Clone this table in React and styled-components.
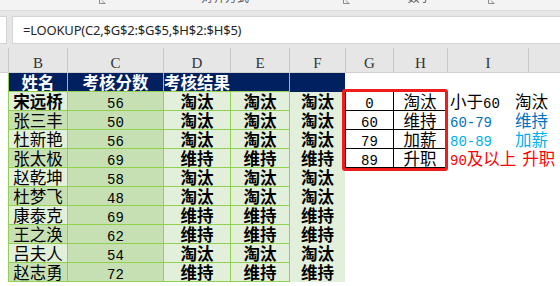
import React from 'react';
import styled, { createGlobalStyle } from 'styled-components';

const GREEN = '#92d050';
const LIGHT = '#e2efda';
const DARK = '#c6e0b4';
const NAVY = '#002060';
const CJK = `"Noto Sans CJK SC", "Noto Sans", sans-serif`;

const Global = createGlobalStyle`
  html, body { margin: 0; padding: 0; background: #fff; }
  body { width: 560px; height: 286px; overflow: hidden; font-family: ${CJK}; }
`;

const Page = styled.div`
  width: 560px;
  height: 286px;
  overflow: hidden;
  display: flex;
  flex-direction: column;
  background: #fff;
`;

const Ribbon = styled.div`
  height: 10px;
  flex: none;
  display: flex;
  background: #f3f3f3;
  border-bottom: 1px solid #d9d9d9;
  overflow: hidden;
`;

const RibbonGroup = styled.div`
  flex: none;
  width: ${(p) => p.$w}px;
  display: flex;
  align-items: flex-start;
`;

const GroupLabel = styled.div`
  flex: 1;
  text-align: center;
  font-family: ${CJK};
  font-size: 12px;
  line-height: 12px;
  color: #606060;
  margin-top: -9px;
  white-space: nowrap;
`;

const Launcher = styled.svg`
  flex: none;
  width: 8px;
  height: 5px;
  margin-right: 2px;
`;

const FormulaArea = styled.div`
  height: 37px;
  flex: none;
  box-sizing: border-box;
  padding: 5px 0 4px;
  display: flex;
  gap: 5px;
  background: #e6e6e6;
`;

const NameBox = styled.div`
  width: 7px;
  background: #fff;
  border: 1px solid #d4d4d4;
  border-left: none;
  box-sizing: border-box;
`;

const FormulaBox = styled.div`
  flex: 1;
  background: #fff;
  border: 1px solid #d4d4d4;
  border-right: none;
  padding-left: 10px;
  font-family: "Noto Sans", sans-serif;
  font-size: 13px;
  letter-spacing: -0.2px;
  line-height: 26px;
  color: #262626;
  white-space: nowrap;
`;

const Sheet = styled.div`
  position: relative;
  flex: none;
  display: grid;
  grid-template-columns: 8px 59px 96px 67px 59px 56px 48px 54px 81px 32px;
  grid-template-rows: 25px repeat(11, 19px);
`;

const HeaderCell = styled.div`
  background: #e6e6e6;
  border-left: ${(p) => (p.$first ? 'none' : '1px solid #c8c8c8')};
  border-bottom: 1px solid #d0d0d0;
  box-sizing: border-box;
  display: flex;
  align-items: flex-end;
  justify-content: center;
  padding-bottom: 1px;
  font-family: "Liberation Serif", serif;
  font-size: 15px;
  line-height: 15px;
  color: #333;
`;

const Cell = styled.div`
  box-sizing: border-box;
  display: block;
  text-align: ${(p) => p.$align || 'center'};
  font-family: ${CJK};
  font-size: 16.5px;
  line-height: 18px;
  font-weight: ${(p) => (p.$bold ? 700 : 400)};
  color: ${(p) => p.$color || '#000'};
  background: ${(p) => p.$bg || 'transparent'};
  border-left: ${(p) => (p.$left ? `1px solid ${p.$left}` : 'none')};
  border-right: ${(p) => (p.$right ? `1px solid ${p.$right}` : 'none')};
  border-bottom: ${(p) => (p.$bottom ? `1px solid ${p.$bottom}` : 'none')};
  white-space: nowrap;
  overflow: visible;
`;

const Blank = styled.div``;

const Num = styled.span`
  font-family: "Liberation Mono", monospace;
  font-size: 14px;
  font-weight: 400;
`;

const LegendCell = styled.div`
  display: flex;
  gap: 6px;
  padding-left: 3px;
  font-family: ${CJK};
  font-size: 16.5px;
  line-height: 18px;
  color: ${(p) => p.$color};
  white-space: nowrap;
`;

const LegendRange = styled.div`
  flex: none;
  min-width: 59px;
`;

const LegendResult = styled.div`
  flex: none;
`;

const RedFrame = styled.div`
  position: absolute;
  left: 342px;
  top: 41px;
  width: 106px;
  height: 82px;
  box-sizing: border-box;
  border: 3px solid #f21b1b;
  border-radius: 3px;
  pointer-events: none;
`;

const rows = [
  ['宋远桥', 56, '淘汰'],
  ['张三丰', 50, '淘汰'],
  ['杜新艳', 56, '淘汰'],
  ['张太极', 69, '维持'],
  ['赵乾坤', 58, '淘汰'],
  ['杜梦飞', 48, '淘汰'],
  ['康泰克', 69, '维持'],
  ['王之涣', 62, '维持'],
  ['吕夫人', 54, '淘汰'],
  ['赵志勇', 72, '维持'],
];

const lookup = [
  [0, '淘汰', ['小于', '60'], '淘汰', '#000'],
  [60, '维持', ['', '60-79'], '维持', '#0070c0'],
  [79, '加薪', ['', '80-89'], '加薪', '#00b0f0'],
  [89, '升职', ['', '90', '及以上'], '升职', '#ff0000'],
];

const columns = ['', 'B', 'C', 'D', 'E', 'F', 'G', 'H', 'I', ''];

function LauncherIcon() {
  return (
    <Launcher viewBox="0 0 8 5">
      <path d="M1.5 0 V3.5 H7.5" fill="none" stroke="#8a8a8a" strokeWidth="1" />
      <path d="M4 0.5 L6.5 3" fill="none" stroke="#8a8a8a" strokeWidth="1" />
    </Launcher>
  );
}

function Range({ parts }) {
  const [pre, num, post] = parts;
  return (
    <LegendRange>
      {pre}
      <Num>{num}</Num>
      {post}
    </LegendRange>
  );
}

export default function App() {
  return (
    <Page>
      <Global />
      <Ribbon>
        <RibbonGroup $w={108}>
          <GroupLabel />
          <LauncherIcon />
        </RibbonGroup>
        <RibbonGroup $w={244}>
          <GroupLabel>对齐方式</GroupLabel>
          <LauncherIcon />
        </RibbonGroup>
        <RibbonGroup $w={145}>
          <GroupLabel>数字</GroupLabel>
          <LauncherIcon />
        </RibbonGroup>
      </Ribbon>
      <FormulaArea>
        <NameBox />
        <FormulaBox>=LOOKUP(C2,$G$2:$G$5,$H$2:$H$5)</FormulaBox>
      </FormulaArea>
      <Sheet>
        {columns.map((c, i) => (
          <HeaderCell key={'h' + i} $first={i === 0}>
            {c}
          </HeaderCell>
        ))}

        <Blank />
        <Cell $bg={NAVY} $color="#fff" $bold $left={GREEN} $bottom={GREEN}>姓名</Cell>
        <Cell $bg={NAVY} $color="#fff" $bold $left={GREEN} $bottom={GREEN}>考核分数</Cell>
        <Cell $bg={NAVY} $color="#fff" $bold $left={GREEN} $bottom={GREEN} $align="left">考核结果</Cell>
        <Cell $bg={NAVY} $bottom={GREEN} />
        <Cell $bg={NAVY} $left={GREEN} />
        <Cell $bottom="#000" />
        <Cell $bottom="#000" />
        <Blank />
        <Blank />

        {rows.map(([name, score, result], i) => {
          const lk = lookup[i];
          return (
            <React.Fragment key={name}>
              <Blank />
              <Cell $bg={i % 2 ? DARK : LIGHT} $bold={i === 0} $left={GREEN} $bottom={GREEN}>
                {name}
              </Cell>
              <Cell $bg={DARK} $left={GREEN} $bottom={GREEN}>
                <Num>{score}</Num>
              </Cell>
              <Cell $bg={LIGHT} $bold $left={GREEN} $bottom={GREEN}>{result}</Cell>
              <Cell $bg={LIGHT} $bold $left={GREEN} $bottom={GREEN}>{result}</Cell>
              <Cell $bg={LIGHT} $bold $left={GREEN}>{result}</Cell>
              {lk ? (
                <>
                  <Cell $left="#000" $bottom="#000">
                    <Num>{lk[0]}</Num>
                  </Cell>
                  <Cell $left="#000" $right="#000" $bottom="#000">{lk[1]}</Cell>
                  <LegendCell $color={lk[4]}>
                    <Range parts={lk[2]} />
                    <LegendResult>{lk[3]}</LegendResult>
                  </LegendCell>
                </>
              ) : (
                <>
                  <Blank />
                  <Blank />
                  <Blank />
                </>
              )}
              <Blank />
            </React.Fragment>
          );
        })}
        <RedFrame />
      </Sheet>
    </Page>
  );
}
